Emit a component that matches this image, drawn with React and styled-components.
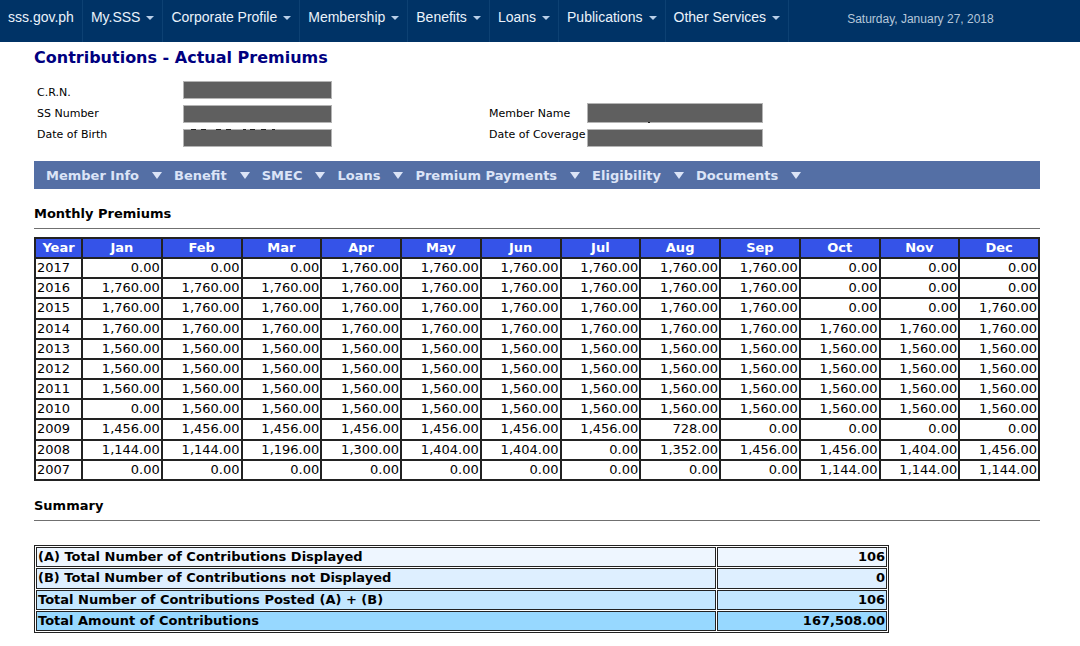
import React from "react";
import styled, { createGlobalStyle } from "styled-components";

const GlobalStyle = createGlobalStyle`
	body {
		margin: 0;
		background: #ffffff;
		color: #000000;
		font-family: Verdana, "DejaVu Sans", sans-serif;
		font-size: 13px;
	}
`;

const TopBar = styled.header`
	display: flex;
	height: 42px;
	background: #003366;
	font-family: "Liberation Sans", Arial, sans-serif;
`;

const TopNav = styled.nav`
	display: flex;
`;

const TopLink = styled.a`
	display: flex;
	gap: 6px;
	box-sizing: border-box;
	padding: 9px 8px 0;
	border-right: 1px solid #0d4173;
	color: #eaf2fb;
	font-size: 14px;
	line-height: 17px;
	text-decoration: none;
	white-space: nowrap;
`;

const TopCaret = styled.span`
	width: 0;
	height: 0;
	margin-top: 7px;
	border: 4px solid transparent;
	border-top-color: #b9cfe8;
	border-bottom: 0;
`;

const Today = styled.time`
	padding: 11px 0 0 58px;
	color: #b5c7da;
	font-size: 12px;
	line-height: 16px;
	white-space: nowrap;
`;

const Page = styled.main`
	padding: 0 40px 12px 34px;
`;

const Title = styled.h1`
	margin: 0;
	padding: 6px 0 13px;
	color: #000080;
	font-size: 16px;
	line-height: 20px;
`;

const Member = styled.section`
	display: grid;
	grid-template-columns: 146px 306px 98px 1fr;
	align-items: end;
	margin-bottom: 14px;
	padding: 0 3px;
	font-size: 11px;
`;

const Labels = styled.div`
	display: flex;
	flex-direction: column;
	padding-bottom: 2px;
	line-height: 21px;
	white-space: nowrap;
`;

const Values = styled.div`
	display: flex;
	flex-direction: column;
	gap: 6px;
`;

const Redacted = styled.div`
	position: relative;
	box-sizing: border-box;
	width: ${props => (props.$wide ? "176px" : "149px")};
	height: ${props => (props.$tall ? "20px" : "18px")};
	border: 1px solid #b4b4b4;
	background: #5f5f5f;
`;

const Ink = styled.svg`
	position: absolute;
	left: -1px;
	${props => (props.$bottom ? "bottom: -1px" : "top: -1px")};
	display: block;
`;

const MenuBar = styled.nav`
	display: flex;
	height: 28px;
	align-items: center;
	padding-left: 12px;
	background: #546fa5;
`;

const MenuButton = styled.button`
	display: flex;
	align-items: center;
	gap: 13px;
	margin: 0;
	padding: 0 12px 0 0;
	border: 0;
	background: none;
	color: #dbe4f7;
	font: bold 13px Verdana, "DejaVu Sans", sans-serif;
	white-space: nowrap;
`;

const MenuCaret = styled.span`
	width: 0;
	height: 0;
	border: 5px solid transparent;
	border-top: 7px solid #dbe4f7;
	border-bottom: 0;
`;

const SectionTitle = styled.h2`
	margin: 0;
	padding: 17px 0 6px;
	border-bottom: 1px solid #707070;
	font-size: 13px;
	line-height: 16px;
`;

const Premiums = styled.table`
	width: 100%;
	height: 244px;
	margin-top: 8px;
	border-collapse: collapse;
	table-layout: fixed;
	border: 2px solid #222222;

	th,
	td {
		padding: 0 1px;
		border: 2px solid #222222;
		line-height: 16px;
		text-align: right;
	}

	thead th {
		background: #3553e8;
		color: #ffffff;
		line-height: 18px;
		text-align: center;
	}

	tbody th {
		font-weight: normal;
		text-align: left;
	}
`;

const YearColumn = styled.col`
	width: 47px;
`;

const Summary = styled.table`
	width: 85%;
	height: 88px;
	margin-top: 24px;
	border: 1px solid #222222;
	border-spacing: 1px;
	font-weight: bold;
`;

const SummaryRow = styled.tr`
	background: ${props => props.$color};

	th,
	td {
		padding: 1px;
		border: 1px solid #222222;
		line-height: 16px;
		text-align: left;
	}

	td {
		width: 20%;
		text-align: right;
	}
`;

const topLinks = ["My.SSS", "Corporate Profile", "Membership", "Benefits", "Loans", "Publications", "Other Services"];

const menus = ["Member Info", "Benefit", "SMEC", "Loans", "Premium Payments", "Eligibility", "Documents"];

const months = ["Jan", "Feb", "Mar", "Apr", "May", "Jun", "Jul", "Aug", "Sep", "Oct", "Nov", "Dec"];

const fill = (amount, count) => Array(count).fill(amount);

const premiums = [
	[2017, ...fill(0, 3), ...fill(1760, 6), ...fill(0, 3)],
	[2016, ...fill(1760, 9), ...fill(0, 3)],
	[2015, ...fill(1760, 9), 0, 0, 1760],
	[2014, ...fill(1760, 12)],
	[2013, ...fill(1560, 12)],
	[2012, ...fill(1560, 12)],
	[2011, ...fill(1560, 12)],
	[2010, 0, ...fill(1560, 11)],
	[2009, ...fill(1456, 7), 728, ...fill(0, 4)],
	[2008, 1144, 1144, 1196, 1300, 1404, 1404, 0, 1352, 1456, 1456, 1404, 1456],
	[2007, ...fill(0, 9), ...fill(1144, 3)]
];

const summary = [
	["(A) Total Number of Contributions Displayed", "106", "#eef6ff"],
	["(B) Total Number of Contributions not Displayed", "0", "#deefff"],
	["Total Number of Contributions Posted (A) + (B)", "106", "#c3e7ff"],
	["Total Amount of Contributions", "167,508.00", "#97d8ff"]
];

const money = amount => amount.toLocaleString("en-US", { minimumFractionDigits: 2 });

const App = () => (
	<>
		<GlobalStyle />
		<TopBar>
			<TopNav>
				<TopLink href="#">sss.gov.ph</TopLink>
				{topLinks.map(label => (
					<TopLink href="#" key={label}>
						{label}
						<TopCaret />
					</TopLink>
				))}
			</TopNav>
			<Today dateTime="2018-01-27">Saturday, January 27, 2018</Today>
		</TopBar>
		<Page>
			<Title>Contributions - Actual Premiums</Title>
			<Member>
				<Labels>
					<span>C.R.N.</span>
					<span>SS Number</span>
					<span>Date of Birth</span>
				</Labels>
				<Values>
					<Redacted />
					<Redacted />
					<Redacted>
						{/* tops of the covered digits */}
						<Ink width="149" height="1">
							<path d="M8 .5h5M18 .5h5M33 .5h5M43 .5h5M60 .5h3M67 .5h5M78 .5h5M89 .5h3" stroke="#222222" />
						</Ink>
					</Redacted>
				</Values>
				<Labels>
					<span>Member Name</span>
					<span>Date of Coverage</span>
				</Labels>
				<Values>
					<Redacted $wide $tall>
						<Ink $bottom width="176" height="1">
							<path d="M61 .5h2" stroke="#222222" />
						</Ink>
					</Redacted>
					<Redacted $wide />
				</Values>
			</Member>
			<MenuBar>
				{menus.map(label => (
					<MenuButton type="button" key={label}>
						{label}
						<MenuCaret />
					</MenuButton>
				))}
			</MenuBar>
			<SectionTitle>Monthly Premiums</SectionTitle>
			<Premiums>
				<colgroup>
					<YearColumn />
				</colgroup>
				<thead>
					<tr>
						<th scope="col">Year</th>
						{months.map(month => (
							<th scope="col" key={month}>
								{month}
							</th>
						))}
					</tr>
				</thead>
				<tbody>
					{premiums.map(([year, ...amounts]) => (
						<tr key={year}>
							<th scope="row">{year}</th>
							{amounts.map((amount, i) => (
								<td key={months[i]}>{money(amount)}</td>
							))}
						</tr>
					))}
				</tbody>
			</Premiums>
			<SectionTitle>Summary</SectionTitle>
			<Summary>
				<tbody>
					{summary.map(([label, value, color]) => (
						<SummaryRow $color={color} key={label}>
							<th scope="row">{label}</th>
							<td>{value}</td>
						</SummaryRow>
					))}
				</tbody>
			</Summary>
		</Page>
	</>
);

export default App;
